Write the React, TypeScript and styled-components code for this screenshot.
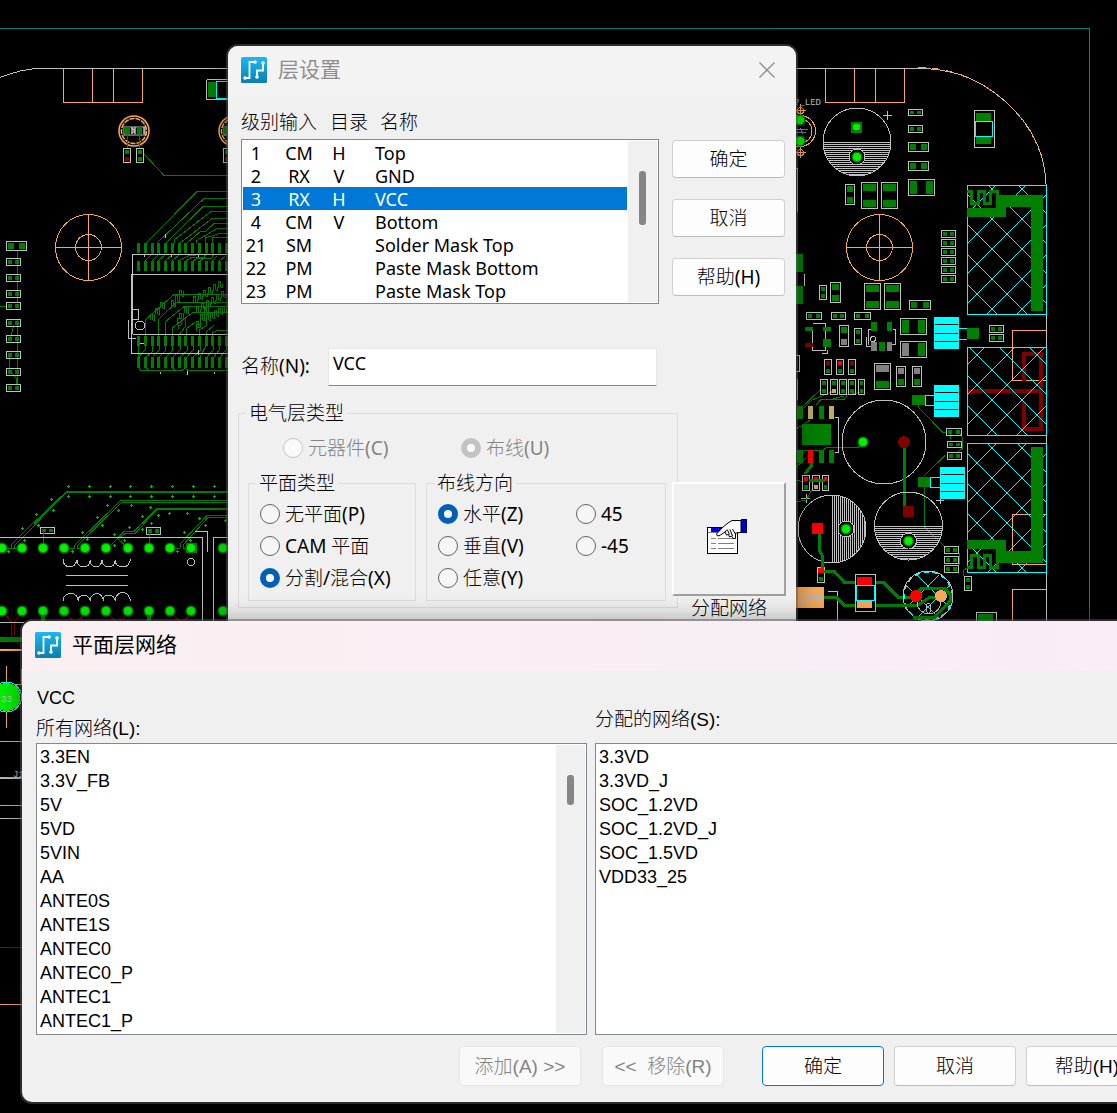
import React, { useState } from "react";
import styled, { createGlobalStyle, css } from "styled-components";

const GREEN = "#008000";
const LIME = "#00f000";
const SILK = "#c0c0c0";
const ORANGE = "#f8a858";
const CYAN = "#00ffff";
const MAROON = "#800000";
const RED = "#ff0000";
const GREY = "#808080";
const TAN = "#b8b060";

const uiFont = `"Noto Sans", "Noto Sans CJK SC Light", "Noto Sans CJK SC", sans-serif`;
const netFont = `"Liberation Sans", "Noto Sans CJK SC Light", "Noto Sans CJK SC", sans-serif`;
const titleFont = `"Noto Sans CJK SC", sans-serif`;

const GlobalStyle = createGlobalStyle`
  *, *::before, *::after { box-sizing: border-box; }
  body { margin: 0; background: #000; }
`;

/* ---------- board drawing ---------- */

type ChipProps = {
  x: number;
  y: number;
  w: number;
  h: number;
  a?: string;
  b?: string;
};

function Chip({ x, y, w, h, a = GREEN, b = GREEN }: ChipProps) {
  const tall = h > w;
  const long = tall ? h : w;
  const pad = long > 24 ? 7 : long > 18 ? 6 : 4;
  const inset = 2;
  return (
    <g>
      <rect x={x + 0.5} y={y + 0.5} width={w} height={h} fill="none" stroke={SILK} />
      {tall ? (
        <>
          <rect x={x + 2} y={y + inset} width={w - 3} height={pad} fill={a} />
          <rect x={x + 2} y={y + h - pad - inset + 1} width={w - 3} height={pad} fill={b} />
        </>
      ) : (
        <>
          <rect x={x + inset} y={y + 2} width={pad} height={h - 3} fill={a} />
          <rect x={x + w - pad - inset + 1} y={y + 2} width={pad} height={h - 3} fill={b} />
        </>
      )}
    </g>
  );
}

function Via({ x, y, r = 5.5 }: { x: number; y: number; r?: number }) {
  return (
    <g shapeRendering="auto" stroke="none">
      <circle cx={x} cy={y} r={r} fill={GREEN} />
      <circle cx={x} cy={y} r={r - 1.500} fill={LIME} />
    </g>
  );
}

function Target({ x, y }: { x: number; y: number }) {
  return (
    <g fill="none" stroke={ORANGE}>
      <circle cx={x} cy={y} r={33} />
      <circle cx={x} cy={y} r={13} />
      <path d={`M${x - 33} ${y}H${x + 33}M${x} ${y - 33}V${y + 33}`} />
    </g>
  );
}

function Capacitor({ x, y, vertical }: { x: number; y: number; vertical?: boolean }) {
  const r = 34;
  let d = "";
  for (let k = 0; k < r; k += 2) {
    const s = Math.sqrt(r * r - k * k);
    d += vertical
      ? `M${x + k + 0.5} ${y - s}V${y + s}`
      : `M${x - s} ${y + k + 0.5}H${x + s}`;
  }
  const cx = vertical ? x + 14 : x;
  const cy = vertical ? y : y + 15;
  return (
    <g fill="none" stroke={SILK}>
      <circle cx={x} cy={y} r={r} />
      <path d={d} />
      <circle cx={cx} cy={cy} r={8} fill="#000" />
      <Via x={cx} y={cy} />
    </g>
  );
}

function Hatched({ x, y, w, h, p, q }: { x: number; y: number; w: number; h: number; p: number; q: number }) {
  const id = `hatch-${y}`;
  let d = "";
  for (let c = Math.floor((x - y - h) / 30) * 30 + p; c < x + w - y; c += 30) {
    d += `M${y + c} ${y}L${y + h + c} ${y + h}`;
  }
  for (let c = Math.floor((x + y) / 30) * 30 + q; c < x + w + y + h; c += 30) {
    d += `M${c - y} ${y}L${c - y - h} ${y + h}`;
  }
  return (
    <g fill="none" stroke={CYAN}>
      <clipPath id={id}>
        <rect x={x} y={y} width={w} height={h} />
      </clipPath>
      <path d={d} clipPath={`url(#${id})`} />
      <rect x={x + 0.5} y={y + 0.5} width={w} height={h} />
    </g>
  );
}

function Inductor({ x, y }: { x: number; y: number }) {
  return (
    <g>
      <rect x={x} y={y} width={25} height={32} fill={CYAN} />
      <path d={`M${x + 1} ${y + 7.5}h23M${x + 1} ${y + 16.5}h23M${x + 1} ${y + 24.5}h23`} stroke="#000" />
    </g>
  );
}

const leftChips: ChipProps[] = [
  { x: 6, y: 241, w: 20, h: 9 },
  ...[258, 274, 290, 302, 319, 335, 351, 368, 384].map((y) => ({ x: 6, y, w: 14, h: 7 })),
  { x: 40, y: 527, w: 14, h: 6 },
  { x: 146, y: 527, w: 14, h: 7 },
  { x: 123, y: 148, w: 7, h: 14, b: MAROON },
  { x: 136, y: 148, w: 7, h: 14 },
  { x: 223, y: 148, w: 7, h: 14, b: MAROON },
];

const rightChips: ChipProps[] = [
  { x: 908, y: 109, w: 14, h: 6 },
  { x: 908, y: 125, w: 14, h: 7 },
  { x: 908, y: 142, w: 20, h: 9 },
  { x: 908, y: 161, w: 20, h: 9 },
  { x: 908, y: 179, w: 26, h: 16 },
  { x: 845, y: 184, w: 9, h: 20 },
  { x: 861, y: 182, w: 16, h: 26 },
  { x: 881, y: 182, w: 16, h: 26 },
  ...[230, 239, 248, 257, 266, 275].map((y) => ({ x: 941, y, w: 14, h: 7 })),
  { x: 819, y: 285, w: 7, h: 14 },
  { x: 830, y: 282, w: 10, h: 20 },
  { x: 864, y: 283, w: 16, h: 26 },
  { x: 884, y: 283, w: 16, h: 26 },
  { x: 909, y: 300, w: 21, h: 9 },
  { x: 806, y: 312, w: 15, h: 7 },
  { x: 831, y: 312, w: 14, h: 7 },
  { x: 854, y: 312, w: 16, h: 7 },
  { x: 900, y: 318, w: 26, h: 16 },
  { x: 900, y: 341, w: 26, h: 16, a: GREY },
  { x: 839, y: 325, w: 9, h: 21, b: GREY },
  { x: 854, y: 328, w: 7, h: 16 },
  { x: 824, y: 359, w: 7, h: 15, a: MAROON },
  { x: 836, y: 359, w: 7, h: 15, a: RED },
  { x: 848, y: 359, w: 7, h: 15, a: MAROON },
  { x: 820, y: 379, w: 7, h: 15 },
  { x: 830, y: 379, w: 7, h: 15, b: TAN },
  { x: 839, y: 379, w: 7, h: 15 },
  { x: 848, y: 379, w: 7, h: 15 },
  { x: 858, y: 379, w: 6, h: 15 },
  { x: 874, y: 363, w: 16, h: 26, a: GREY },
  { x: 896, y: 366, w: 9, h: 20, a: GREY },
  { x: 912, y: 366, w: 9, h: 20, a: GREY },
  { x: 989, y: 325, w: 14, h: 7 },
  { x: 989, y: 334, w: 14, h: 7 },
  { x: 946, y: 428, w: 15, h: 7 },
  { x: 947, y: 441, w: 14, h: 6 },
  { x: 947, y: 452, w: 14, h: 7 },
  { x: 944, y: 546, w: 14, h: 7 },
  { x: 944, y: 556, w: 14, h: 7 },
  { x: 944, y: 565, w: 14, h: 7 },
  { x: 964, y: 576, w: 7, h: 14 },
  { x: 802, y: 475, w: 7, h: 15, a: RED },
  { x: 812, y: 475, w: 7, h: 15, a: RED, b: TAN },
  { x: 822, y: 475, w: 6, h: 15, a: RED },
  { x: 817, y: 567, w: 7, h: 15, a: RED },
];

const padColumns = Array.from({ length: 14 }, (_, i) => 137 + Math.round(i * 6.75));
const viaColumns = [2, 22, 43, 64, 85, 106, 128, 149, 170, 191, 223];
const smallVias: [number, number][] = [
  [68, 486], [89, 486], [110, 486], [130, 486], [151, 486], [172, 486], [193, 486], [214, 486],
  [68, 496], [89, 496], [110, 496], [130, 496], [151, 496], [172, 496], [193, 496], [214, 496],
  [51, 499], [53, 510], [36, 514], [38, 525], [22, 528], [24, 540], [8, 551], [107, 505], [118, 510],
  [97, 517], [102, 525], [82, 532], [87, 539], [72, 551], [131, 505], [150, 507], [158, 515],
  [142, 516], [151, 523], [129, 527], [142, 529], [114, 534], [124, 540], [114, 545], [169, 513],
  [187, 513], [199, 518], [205, 525], [184, 532], [190, 540], [177, 551], [225, 520],
];

/* length-matched serpentine starting at a point; dx and dy drift it along its route */
function wiggle(x: number, y: number, n: number, dx: number, dy: number) {
  let d = `M${x} ${y}`;
  for (let i = 0; i < n; i++) {
    d += `v-5l1 -1h1v5l1 1h1v-3l${dx} ${dy}`;
  }
  return d;
}

function ConnectorArea() {
  return (
    <g fill="none" stroke={GREEN}>
      <path
        d="M146 243L197 191.500H230M157 243L204 198.500H230M166 243L203 206.500H230M174 243V240L211 211.500H230M180 243L212 218.500H230
        M187 243L201 231H206L214 223.500H230M196 243V241L217 228.500H230M205 243V238L220 233.500H230M212 243V237L224 237.500H230"
      />
      <path
        d="M145 261L153 253M152 261L160 253M158 261L166 254M165 261L173 254M172 261L180 254M178 261L190 255H196L200 251M186 261L192 257H204L207 253
        M193 261L198 258H212L214 253M200 261L206 257M212 261L217 256M219 261L225 256"
      />
      <path
        d="M145 336V320L174 294.500H230M158 336V320L176 302.500H230M165 336V322L184 306.500H230M172 336V328L193 312.500H230M178 336L185 327V318
        M186 336V329L195 322M199 336V330L206 326V318M212 336V333L218 330H230M206 336V332L214 325"
      />
      <path d={wiggle(150, 320, 3, 1, -3)} />
      <path d={wiggle(171, 306, 3, 0, -2)} />
      <path d={wiggle(193, 302, 6, 1, 0)} />
      <path d={wiggle(179, 319, 2, 1, -3)} />
      <path d={wiggle(196, 312, 6, 1, 0)} />
      <path d={wiggle(196, 327, 3, 0, -4)} />
      <path d={wiggle(206, 320, 5, 0, 1)} />
      <path d="M178 329v-3l3 -1v-2l-4 -1v-3l4 -1M196 331v-3l4 -1v-2l-4 -1v-3" />
      <path
        d="M138 346V357M145 346V350L139 357M152 346V352L146 357M159 346V350L153 356M165 346V351L159 357M172 346V351L166 357M180 346V350L173 357
        M187 346V351L180 357M193 346V350L187 357M200 346V351L193 357M206 346L200 357M213 346V350L207 357M219 346V350L214 357M226 346V350L220 357"
      />
      <path d="M138 367L141 370.500H182L185 368L188 370.500H230M145 367L149 370M172 368L175 370" />
      <g fill={GREEN} stroke="none">
        {padColumns.map((x) => (
          <React.Fragment key={x}>
            <rect x={x} y={243} width={3} height={10} />
            <rect x={x} y={261} width={3} height={10} />
            <rect x={x} y={336} width={3} height={10} />
            <rect x={x} y={357} width={3} height={11} />
          </React.Fragment>
        ))}
      </g>
      <g stroke={SILK}>
        <path d="M230 254.500H132.500V334M230 274.500H131.500V353.500H230M230 334.500H132.500M132 309.500H138.500V319.500H132M128.500 320V338.500H136M140 343.500H144" />
        <path d="M165.500 234V238M144.500 254V257M171.500 254V257M198.500 254V257M160.500 372V374M187.500 371V375M214.500 372V374M198.500 350V355" />
        <circle cx={140} cy={325.500} r={4.500} />
      </g>
    </g>
  );
}

function TransformerArea() {
  return (
    <g fill="none" stroke={GREEN}>
      <path d="M228 492H66.500L34 524" strokeWidth={2} />
      <path d="M38 518L11 545V548M41 519L14 546V548" />
      <path d="M230 500.500H120.500L74 546V548M230 502.500H121.500L77 546V548H85" />
      <path d="M228 509H157L142 524" strokeWidth={2} />
      <path d="M145 520L134 531.500H124L111 545M147 521L135 533.500H125L118 539L127 547" />
      <path d="M230 515.500H207L180 544V548M230 517.500H208L183 545V548H190" />
      <path d="M0 548H20M64 548H75M170 548H180M43.500 532V546M149.500 533V546" />
      <g fill="#00c000" stroke="none">
        {smallVias.map(([x, y]) => (
          <path key={`${x}-${y}`} d={`M${x - 1} ${y}h3v1h-3zM${x} ${y - 1}h1v3h-1z`} />
        ))}
      </g>
      <path d="M4 613L11 621V636L22 647M22 613L14 621V636M64 613L74 621M85 613L78 621M106 613L116 621M128 613L120 621M170 613L180 621M191 613L184 621" stroke={MAROON} />
      <path d="M43 614V621M149 614V621" strokeWidth={4} />
      <path d="M0 639.500H24" strokeWidth={5} />
      <g stroke={SILK}>
        <path d="M0 537.500H202.500V621M230 537.500H213.500V621M195 531.500H207.500V552M0 622.500H24M66 575.500H128M66 585.500H128" />
        <path d="M63.500 559V563Q66 567 70 567Q75 567 77 560V563Q80 567 84 567Q89 567 90.500 560V563Q93 567 96 567Q101 567 102 560V563Q105 567 109 567Q114 567 115.500 560V563Q118 567 123 567Q129 567 130.500 559" />
        <path d="M63.500 601V598Q66 593.500 71 593.500Q77 593.500 78.500 601V598Q81 595 84 595Q88 595 90.500 601V598Q93 593.500 97 593.500Q102 593.500 103.500 601V598Q105 595 109 595Q114 595 115.500 601V598Q118 592.500 123 592.500Q129 593 130.500 601" />
        <circle cx={191} cy={562} r={3.500} />
      </g>
      <rect x={186} y={543} width={11} height={10} fill={GREEN} stroke="none" />
      {viaColumns.map((x) => (
        <React.Fragment key={x}>
          <Via x={x} y={548} />
          <Via x={x} y={611} />
        </React.Fragment>
      ))}
    </g>
  );
}

function Board() {
  return (
    <BoardSvg width={1117} height={1113} viewBox="0 0 1117 1113" shapeRendering="crispEdges" aria-hidden="true">
      <path d="M0 28.500H1089.500V625" fill="none" stroke="#008080" />

      <g fill="none" stroke={SILK}>
        <path d="M0 77.500Q22 69 38 68.500H240M790 68.500H918Q960 68 993 91.500Q1044 129 1046 184V625" />
        <path d="M918 67.500Q960 67.500 994 92.500Q1030 119 1042 158" stroke={ORANGE} strokeDasharray="8 6" />
      </g>
      <path
        d="M63.500 69V102.500H142.500V69M92.500 69V102M113.500 69V102M825.500 69V102.500H904.500V69M854.500 69V102M875.500 69V102"
        fill="none"
        stroke={ORANGE}
      />

      {/* left of the dialogs */}
      <path d="M206.500 79.500H230M206.500 79.500V99.500H230" fill="none" stroke={SILK} />
      <rect x={208} y={82} width={8} height={15} fill={GREEN} />
      <path d="M230 81.500H216.500V98.500H230" fill="none" stroke={CYAN} />
      {[134, 234].map((x) => (
        <g key={x} fill="none" stroke={ORANGE} shapeRendering="auto">
          <circle cx={x} cy={131} r={15} strokeWidth={1.500} />
          <circle cx={x} cy={131} r={12.500} strokeDasharray="5 1" strokeWidth={1.500} />
          <rect x={x - 10} y={127} width={21} height={8} stroke={SILK} />
          <rect x={x - 10} y={127} width={6} height={7} fill={GREEN} stroke="none" />
          <rect x={x + 3} y={127} width={5} height={7} fill={GREEN} stroke="none" />
          <path d={`M${x - 2} 127v7M${x + 1} 127v7M${x - 2} 128l3 3l-3 2M${x + 10} 127v7`} stroke={SILK} strokeWidth={1.500} />
        </g>
      ))}
      <path d="M127.500 134V148M139.500 134V148M144 154L164 175.500H230M227.500 134V148" fill="none" stroke={GREEN} />
      <Target x={88.5} y={247.5} />
      <path d="M17.500 250V303M0 306.500H7M17.500 320V384M9.500 340L14 325M9.500 354V370L16 378V384" fill="none" stroke={GREEN} />
      {leftChips.map((c) => (
        <Chip key={`${c.x}-${c.y}`} {...c} />
      ))}
      <ConnectorArea />
      <TransformerArea />

      {/* strip beside the lower dialog */}
      <g fill="none" stroke={ORANGE}>
        <path d="M0 650.500H24M6.500 666V728M0 684.500H24M21.500 669V684M0 741.500H24M0 777.500H24M0 805.500H24M0 1004.500H24" />
        <path d="M0 649.500H24M0 778.500H24M0 818.500H24" stroke={SILK} />
        <path d="M0 947.500H24" stroke="#303030" />
      </g>
      <circle cx={6.5} cy={697} r={15} fill="#000" stroke={CYAN} />
      <circle cx={6.5} cy={697} r={14} fill={LIME} />
      <Designator x={1} y={702}>33</Designator>
      <Designator x={13} y={777}>J1</Designator>

      {/* right of the dialogs */}
      <Designator x={794} y={105}>?_LED</Designator>
      <g fill="none" stroke={ORANGE}>
        <circle cx={800} cy={131} r={15.500} />
        <circle cx={800} cy={131} r={12} />
        <path d="M795 110.500H806M800.500 104V116M795 152.500H806M800.500 147V158" />
        <circle cx={800.500} cy={110.500} r={3} />
        <circle cx={800.500} cy={152.500} r={3} />
      </g>
      <path d="M796 129.500H808M796 132.500H806M800 128L803 134" stroke="#7878b8" fill="none" />
      <Via x={800} y={120} />
      <Via x={800} y={141} />
      <Capacitor x={857} y={142} />
      <rect x={851} y={122} width={11} height={11} fill={GREEN} />
      <circle cx={856.5} cy={127} r={3.500} fill={LIME} />
      <path d="M883 115.500H892M887.500 111V120M936 500.500H944M940.500 496V504M801 498.500H810M806.500 494V503" stroke={SILK} fill="none" />
      <Target x={879.5} y={247.5} />
      <rect x={796} y={254} width={7} height={18} fill={GREEN} />
      <rect x={796} y={286} width={7} height={18} fill={GREEN} />
      <path d="M804.500 274V286M796 168.500H797.500V212M796 355.500H799.500V371.500H796M797.500 379V400" stroke={SILK} fill="none" />

      <g fill="none" stroke={GREEN}>
        <path d="M820 390L800 409M834 391L812 400L804 408M844 396L831 399.500H821L816 405M848 394L844 399.500H831M852 394L862 392M796 429L810 420M796 450H823L827 447.500H858L863 443M796 467L806 458" />
        <path d="M918 404V407L943 432.500H947M960 433L962.500 438V448L958 452M950 434V439M945 455.500L924 476M924.500 487V527L946 548M959 553V565M968 567L963 571V576M796 480L804 482M796 502L806 500L813 488" />
      </g>
      {rightChips.map((c) => (
        <Chip key={`${c.x}-${c.y}`} {...c} />
      ))}
      <rect x={974.5} y={110.500} width={20} height={37} fill="none" stroke={SILK} />
      <path d="M976 113h15v8h-15zM976 136h15v8h-15z" fill={GREEN} />
      <rect x={975.5} y={121.500} width={17} height={15} fill="#000" stroke={CYAN} />

      <path d="M812.500 323.500h13v4M825.500 331v8M812.500 331v12M812.500 347v3h13v-3M822 353.500h5v-4M872 329.500H868.500V344.500M893 329.500H895.500V344.500H892M866.500 337V346.500H872" fill="none" stroke={SILK} />
      <circle cx={873} cy={339} r={2.500} fill="none" stroke={SILK} />
      <path d="M805 327h8v4h-8zM823 327h8v4h-8zM823 339h8v8h-8zM871 322h6v9h-6zM887 322h5v9h-5zM879 342h6v9h-6z" fill={GREEN} />
      <path d="M805 343h8v4h-8z" fill={MAROON} />
      <path d="M871 342h6v9h-6zM887 342h5v9h-5z" fill={GREY} />

      <Inductor x={934} y={317} />
      <Inductor x={934} y={385} />
      <Inductor x={940} y={467} />
      <path d="M959 328.500H967M959 339.500H967M925.500 395.500h9v10h-9zM930.500 477.500h10v10h-10z" fill="none" stroke={CYAN} />
      <path d="M967 328h12v11h-12zM912 395h13v10h-13zM918 477h12v10h-12z" fill={GREEN} />

      <g fill="none" stroke={ORANGE}>
        <path d="M1046 330.500H1012.500V380.500H1046M1046 514.500H1012.500V564.500H1046M1046 589.500H1012.500V625" />
      </g>
      <path d="M1024 381V354H1041V429H1024V402M967 391H1041" fill="none" stroke={MAROON} strokeWidth={4} />
      <Hatched x={967} y={185} w={79} h={129} p={23} q={11} />
      <Hatched x={967} y={347} w={79} h={88} p={22} q={12} />
      <Hatched x={967} y={443} w={79} h={129} p={4} q={0} />
      <g fill="none" stroke={GREEN} strokeWidth={3}>
        <path d="M967 191H971V203H978V191H984V203H990V191H997V200M967 567H971V555H978V567H984V555H990V567H997V560" />
      </g>
      <path
        d="M996 195H1043V311H1031V207H1006V217H967V208H996zM1043 447V563H996V549H967V540H1006V551H1031V447z"
        fill={GREEN}
      />

      <path d="M797 406h6v13h-6zM819 406h5v13h-5zM802 424h29v21h-29zM797 450h6v13h-6zM819 450h5v13h-5zM829 450h5v13h-5z" fill={GREEN} />
      <path d="M808 406h5v13h-5zM829 406h5v13h-5z" fill={TAN} />
      <path d="M808 450h5v13h-5z" fill={RED} />
      <path d="M835 417.500H838.500V452.500H835M828 591.500H837.500V621" fill="none" stroke={SILK} />
      <path d="M811 463V466L805 474M809 480H825" fill="none" stroke={GREEN} strokeWidth={3} />

      <circle cx={884} cy={442} r={42} fill="none" stroke={SILK} />
      <Via x={863} y={442} />
      <path d="M904 445V508" stroke={GREEN} strokeWidth={3} />
      <circle cx={904} cy={442} r={6} fill={MAROON} />
      <Capacitor x={908.5} y={526} />
      <rect x={903} y={506} width={11} height={11} fill={MAROON} />
      <Capacitor x={832} y={529} vertical />
      <path d="M819 530V550L822 555V571M820 571H834L844 582H883L898 597H912M824 597H836L844 605H893H918L930 597H940" fill="none" stroke={GREEN} strokeWidth={3} />
      <rect x={812} y={523} width={11} height={11} fill={RED} />
      <rect x={818} y={568} width={5} height={5} fill={RED} />

      <rect x={855.5} y={574.500} width={20} height={37} fill="#000" stroke={SILK} />
      <rect x={857} y={577} width={15} height={8} fill={RED} />
      <rect x={857} y={600} width={15} height={8} fill={ORANGE} />
      <rect x={856.5} y={585.500} width={18} height={15} fill="#000" stroke={CYAN} />
      <rect x={796} y={587} width={28} height={21} fill={ORANGE} />
      <path d="M799 595l4 -2l3 2l-6 7h5M808 593l5 9M812 593l-5 9M812 593V602M816 602V593L820 602V593" fill="none" stroke="#b8b8b8" />

      <g fill="none">
        <circle cx={928} cy={596} r={25} stroke={SILK} />
        <circle cx={928} cy={596} r={24} stroke={CYAN} strokeDasharray="5 4" />
        <path d="M917 575L951 609M939 575L905 609M906 585L940 619M950 585L915 620" stroke={CYAN} />
        <path d="M916 594L922 588H944L950 594V601L935 617H913" stroke={GREEN} strokeWidth={3} />
        <path d="M898 605H918L930 597H940" stroke={GREEN} strokeWidth={3} />
        <path d="M917 602Q918 613 928 614Q940 613 941 602" stroke={SILK} />
        <ellipse cx={928.5} cy={608} rx={2} ry={5} stroke={SILK} />
      </g>
      <circle cx={916} cy={596} r={6} fill={RED} />
      <circle cx={941} cy={596} r={6} fill={ORANGE} />
      <rect x={976.5} y={612.500} width={20} height={12} fill="none" stroke={SILK} />
      <rect x={978} y={614} width={15} height={8} fill={GREEN} />
    </BoardSvg>
  );
}

const BoardSvg = styled.svg`
  position: absolute;
  inset: 0 auto auto 0;
`;

const Designator = styled.text`
  font: 9px "Liberation Mono", monospace;
  fill: #c0c0c0;
`;

/* ---------- shared window parts ---------- */

const Desktop = styled.main`
  position: relative;
  min-height: max(100vh, 1113px);
  overflow: hidden;
  background: #000;
  color: #000;
`;

const Window = styled.section<{ $left: number; $top: number; $width: number }>`
  position: absolute;
  left: ${(p) => p.$left}px;
  top: ${(p) => p.$top}px;
  width: ${(p) => p.$width}px;
  border-radius: 10px;
  background: #f0f0f0;
  box-shadow: 0 0 0 2px rgba(90, 90, 90, 0.5), 0 2px 24px 4px rgba(0, 0, 0, 0.3);
`;

const TitleBar = styled.header<{ $active?: boolean }>`
  display: flex;
  align-items: center;
  gap: 11px;
  height: 50px;
  padding: 0 21px 2px 13px;
  border-radius: 10px 10px 0 0;
  color: ${(p) => (p.$active ? "#000" : "#8e8e8e")};
  background: ${(p) => (p.$active ? "linear-gradient(90deg, #faf0f2, #f8edf8)" : "#f3f3f3")};
`;

const Title = styled.h1`
  flex: 1;
  margin: 0;
  padding-bottom: 4px;
  font: 400 21px/28px ${titleFont};
`;

const CloseButton = styled.button`
  display: grid;
  padding: 0;
  border: 0;
  background: none;
  color: #8e8e8e;
`;

const boxButton = css`
  border: 1px solid #d0d0d0;
  border-bottom-color: #bcbcbc;
  border-radius: 4px;
  background: #fdfdfd;
  color: #000;
  padding: 0;
`;

function AppIcon() {
  return (
    <svg width={26} height={26} viewBox="0 0 26 26" aria-hidden="true">
      <defs>
        <linearGradient id="app-icon" x1="0" y1="0" x2="0" y2="1">
          <stop offset="0" stopColor="#1cb8f4" />
          <stop offset="1" stopColor="#0a7fb0" />
        </linearGradient>
      </defs>
      <rect width={26} height={26} rx={1.500} fill="url(#app-icon)" />
      <path d="M4 21H8.500V5H14M16 20V13.500H22V6" fill="none" stroke="#fff" strokeWidth={1.800} />
      <g fill="#fff">
        <circle cx={4} cy={21} r={1.800} />
        <circle cx={14} cy={5} r={1.800} />
        <circle cx={16} cy={20} r={1.800} />
        <circle cx={22} cy={6} r={1.800} />
      </g>
    </svg>
  );
}

const Thumb = styled.div<{ $top: number; $height: number }>`
  width: 7px;
  height: ${(p) => p.$height}px;
  margin: ${(p) => p.$top}px 0 0 11px;
  border-radius: 3px;
  background: #868686;
`;

const Track = styled.div`
  width: 29px;
  background: #f0f0f0;
`;

/* ---------- layer setup dialog ---------- */

const LayerBody = styled.div`
  display: grid;
  grid-template-columns: 1fr 114px;
  column-gap: 13px;
  padding: 12px 10px 40px 13px;
  font: 18px/24px ${uiFont};
`;

const ColumnHeads = styled.div`
  display: grid;
  grid-template-columns: 38px 51px 50px 1fr;
  height: 31px;
  font-size: 19px;
  line-height: 28px;
`;

const LayerFrame = styled.div`
  display: grid;
  grid-template-columns: 1fr 29px;
  height: 165px;
  padding: 1px;
  border: 1px solid #828790;
  background: #fff;
`;

const LayerTable = styled.table`
  display: block;
  margin-right: 1px;
  border-collapse: collapse;

  tbody {
    display: block;
  }
`;

const LayerRow = styled.tr<{ $selected: boolean }>`
  display: grid;
  grid-template-columns: 26px 60px 20px 1fr;
  height: 23px;
  line-height: 25px;
  text-align: center;
  white-space: nowrap;
  background: ${(p) => (p.$selected ? "#0078d7" : "#fff")};
  color: ${(p) => (p.$selected ? "#fff" : "#000")};
`;

const Cell = styled.td`
  height: 23px;
  padding: 0;
`;

const NameCell = styled(Cell)`
  padding-left: 26px;
  text-align: left;
`;

const NameField = styled.label`
  display: flex;
  align-items: center;
  justify-content: space-between;
  margin: 44px 2px 13px 0;
  font-size: 19px;
`;

const NameText = styled.span`
  padding-bottom: 3px;
`;

const NameInput = styled.input`
  width: 329px;
  height: 38px;
  padding: 0 4px 9px;
  border: 1px solid #e6e6e6;
  border-bottom-color: #868686;
  background: #fff;
  font: 18px/24px ${uiFont};
`;

const Group = styled.fieldset`
  margin: 0;
  padding: 0;
  border: 1px solid #dcdcdc;
  min-width: 0;
  font-size: 19px;
`;

const ElectricGroup = styled(Group)`
  height: 209px;
  margin: 0 -19px 0 -3px;
`;

const Legend = styled.legend`
  margin-left: 7px;
  padding: 0 3px;
  line-height: 28px;
`;

const TypeRow = styled.div`
  display: grid;
  grid-template-columns: 178px 1fr;
  padding: 7px 0 7px 44px;
`;

const GroupRow = styled.div`
  display: grid;
  grid-template-columns: 168px 240px;
  gap: 10px;
  padding-left: 9px;
`;

const Choices = styled.div<{ $cols?: number }>`
  display: grid;
  grid-template-columns: ${(p) => (p.$cols === 2 ? "138px 1fr" : "1fr")};
  grid-auto-rows: 32px;
  height: 103px;
  padding: 1px 0 0 11px;
`;

const RadioLabel = styled.label<{ $disabled?: boolean }>`
  display: flex;
  align-items: center;
  gap: 5px;
  white-space: nowrap;
  line-height: 28px;
  color: ${(p) => (p.$disabled ? "#838383" : "#000")};
`;

const RadioInput = styled.input`
  appearance: none;
  flex: none;
  width: 20px;
  height: 20px;
  margin: 0;
  border: 1px solid #626262;
  border-radius: 50%;
  background: #f6f6f6;

  &:checked {
    border: 6px solid #005fb8;
    background: #fff;
  }
  &:disabled {
    border-color: #c3c3c3;
    background: #fbfbfb;
  }
`;

type RadioProps = {
  name: string;
  label: string;
  checked: boolean;
  disabled?: boolean;
  onPick?: () => void;
};

function Radio({ name, label, checked, disabled, onPick }: RadioProps) {
  return (
    <RadioLabel $disabled={disabled}>
      <RadioInput type="radio" name={name} checked={checked} disabled={disabled} onChange={() => onPick?.()} />
      {label}
    </RadioLabel>
  );
}

const Side = styled.div`
  display: flex;
  flex-direction: column;
  gap: 21px;
  padding-top: 32px;
`;

const SideButton = styled.button`
  ${boxButton}
  width: 113px;
  height: 38px;
  font: 19px/28px ${uiFont};
`;

const AssignBlock = styled.div`
  display: grid;
  justify-items: center;
  position: relative;
  margin-top: 165px;
  font-size: 19px;
`;

const AssignButton = styled.button`
  display: grid;
  place-items: center;
  width: 114px;
  height: 114px;
  padding: 0 5px 4px 0;
  border: 2px solid;
  border-color: #fff #a0a0a0 #a0a0a0 #fff;
  background: #f0f0f0;
`;

function AssignIcon() {
  return (
    <svg width={40} height={36} viewBox="0 0 40 36" aria-hidden="true">
      <g shapeRendering="crispEdges">
        <rect x={0.500} y={8.500} width={30} height={26} fill="#fff" stroke="#000" />
        <path d="M1 34.500H31M30.500 9V35" stroke="#000" />
        <rect x={4} y={9} width={14} height={4} fill="#0000f0" />
        <path d="M1 13.500H30" stroke="#808080" />
        <path d="M4 19.500H9M11 19.500H27M4 24.500H9M11 24.500H27M4 29.500H9M11 29.500H27" stroke="#808080" />
      </g>
      <path
        d="M34 1.500H25L21 4L15 9L9.500 15L10.500 17L13.500 16L18 13L19.500 16L21.500 15.500L22.500 18L24.500 17L26 19.500L28.500 19.500L28.500 14L34 13.500Z"
        fill="#fff"
        stroke="#000"
      />
      <path d="M18 13L20 10.500M20.500 11L22.500 15.500M23 10.500L25.500 17M25.500 10L28.500 15" fill="none" stroke="#000" />
      <rect x={34.500} y={0.500} width={5} height={13} fill="#0000c8" stroke="#000040" />
      <path d="M4 17.500h1M12 17.500h1M20 17.500h1M28 21.500h1M4 26.500h1M12 26.500h1M20 26.500h1M28 26.500h1M28 2.500h1" stroke="#ff0" />
    </svg>
  );
}

const layers = [
  ["1", "CM", "H", "Top"],
  ["2", "RX", "V", "GND"],
  ["3", "RX", "H", "VCC"],
  ["4", "CM", "V", "Bottom"],
  ["21", "SM", "", "Solder Mask Top"],
  ["22", "PM", "", "Paste Mask Bottom"],
  ["23", "PM", "", "Paste Mask Top"],
];

function LayerDialog() {
  const [selected, setSelected] = useState(2);
  const [plane, setPlane] = useState("分割/混合(X)");
  const [direction, setDirection] = useState("水平(Z)");
  return (
    <Window $left={228} $top={46} $width={568}>
      <TitleBar>
        <AppIcon />
        <Title>层设置</Title>
        <CloseButton aria-label="关闭">
          <svg width={16} height={16} viewBox="0 0 16 16" aria-hidden="true">
            <path d="M.5 .5L15.500 15.500M15.500 .5L.5 15.500" stroke="currentColor" strokeWidth={1.300} />
          </svg>
        </CloseButton>
      </TitleBar>
      <LayerBody>
        <div>
          <ColumnHeads id="layer-heads">
            <span>级别</span>
            <span>输入</span>
            <span>目录</span>
            <span>名称</span>
          </ColumnHeads>
          <LayerFrame>
            <LayerTable aria-labelledby="layer-heads">
              <tbody>
                {layers.map(([level, kind, dir, name], i) => (
                  <LayerRow key={level} $selected={i === selected} onClick={() => setSelected(i)}>
                    <Cell>{level}</Cell>
                    <Cell>{kind}</Cell>
                    <Cell>{dir}</Cell>
                    <NameCell>{name}</NameCell>
                  </LayerRow>
                ))}
              </tbody>
            </LayerTable>
            <Track>
              <Thumb $top={30} $height={54} />
            </Track>
          </LayerFrame>
          <NameField>
            <NameText>名称(N):</NameText>
            <NameInput defaultValue="VCC" />
          </NameField>
          <ElectricGroup>
            <Legend>电气层类型</Legend>
            <TypeRow>
              <Radio name="electric" label="元器件(C)" checked={false} disabled />
              <Radio name="electric" label="布线(U)" checked disabled />
            </TypeRow>
            <GroupRow>
              <Group>
                <Legend>平面类型</Legend>
                <Choices>
                  {["无平面(P)", "CAM 平面", "分割/混合(X)"].map((t) => (
                    <Radio key={t} name="plane" label={t} checked={plane === t} onPick={() => setPlane(t)} />
                  ))}
                </Choices>
              </Group>
              <Group>
                <Legend>布线方向</Legend>
                <Choices $cols={2}>
                  {["水平(Z)", "45", "垂直(V)", "-45", "任意(Y)"].map((t) => (
                    <Radio key={t} name="direction" label={t} checked={direction === t} onPick={() => setDirection(t)} />
                  ))}
                </Choices>
              </Group>
            </GroupRow>
          </ElectricGroup>
        </div>
        <Side>
          <SideButton>确定</SideButton>
          <SideButton>取消</SideButton>
          <SideButton>帮助(H)</SideButton>
          <AssignBlock>
            <AssignButton aria-labelledby="assign-nets">
              <AssignIcon />
            </AssignButton>
            <span id="assign-nets">分配网络</span>
          </AssignBlock>
        </Side>
      </LayerBody>
    </Window>
  );
}

/* ---------- plane net dialog ---------- */

const NetBody = styled.div`
  padding: 13px 14px 16px;
  font: 18px/26px ${netFont};
`;

const NetColumns = styled.div`
  display: grid;
  grid-template-columns: 1fr 1fr;
  align-items: end;
  gap: 8px;
  padding-right: 2px;
`;

const NetLabel = styled.label<{ $gap: number }>`
  display: block;
  padding-bottom: ${(p) => p.$gap}px;
  font-size: 19px;
  line-height: 28px;
`;

const LayerName = styled.div`
  padding: 0 0 3px 1px;
  line-height: 28px;
`;

const NetFrame = styled.div`
  display: flex;
  height: 292px;
  padding: 1px;
  border: 1px solid #828790;
  background: #fff;
`;

const NetSelect = styled.select`
  flex: 1;
  min-width: 0;
  height: 288px;
  padding: 0;
  border: 0;
  outline: 0;
  overflow: hidden;
  background: #fff;
  color: #000;
  font: 18px/24px ${netFont};

  option {
    height: 24px;
    min-height: 24px;
    padding: 2px 2px 0;
    line-height: 22px;
  }
`;

const Footer = styled.footer`
  display: flex;
  justify-content: flex-end;
  gap: 10px;
  padding-top: 11px;
`;

const FootButton = styled.button<{ $primary?: boolean; $after?: number }>`
  ${boxButton}
  width: 122px;
  height: 40px;
  padding-top: 2px;
  margin-right: ${(p) => p.$after ?? 0}px;
  font: 19px/28px ${netFont};
  white-space: pre;
  ${(p) => p.$primary && "border-color: #0078d4;"}

  &:disabled {
    border-color: #e6e6e6;
    background: #f9f9f9;
    color: #838383;
  }
`;

const allNets = ["3.3EN", "3.3V_FB", "5V", "5VD", "5VIN", "AA", "ANTE0S", "ANTE1S", "ANTEC0", "ANTEC0_P", "ANTEC1", "ANTEC1_P"];
const assignedNets = ["3.3VD", "3.3VD_J", "SOC_1.2VD", "SOC_1.2VD_J", "SOC_1.5VD", "VDD33_25"];

function NetDialog() {
  return (
    <Window $left={22} $top={621} $width={1140}>
      <TitleBar $active>
        <AppIcon />
        <Title>平面层网络</Title>
      </TitleBar>
      <NetBody>
        <NetColumns>
          <div>
            <LayerName>VCC</LayerName>
            <NetLabel htmlFor="all-nets" $gap={0}>所有网络(L):</NetLabel>
            <NetFrame>
              <NetSelect id="all-nets" multiple size={12}>
                {allNets.map((n) => (
                  <option key={n}>{n}</option>
                ))}
              </NetSelect>
              <Track>
                <Thumb $top={30} $height={30} />
              </Track>
            </NetFrame>
          </div>
          <div>
            <NetLabel htmlFor="assigned-nets" $gap={9}>分配的网络(S):</NetLabel>
            <NetFrame>
              <NetSelect id="assigned-nets" multiple size={12}>
                {assignedNets.map((n) => (
                  <option key={n}>{n}</option>
                ))}
              </NetSelect>
            </NetFrame>
          </div>
        </NetColumns>
        <Footer>
          <FootButton disabled $after={11}>{"添加(A) >>"}</FootButton>
          <FootButton disabled $after={28}>{"<<  移除(R)"}</FootButton>
          <FootButton $primary>确定</FootButton>
          <FootButton>取消</FootButton>
          <FootButton>帮助(H)</FootButton>
        </Footer>
      </NetBody>
    </Window>
  );
}

export default function App() {
  return (
    <Desktop>
      <GlobalStyle />
      <Board />
      <LayerDialog />
      <NetDialog />
    </Desktop>
  );
}
